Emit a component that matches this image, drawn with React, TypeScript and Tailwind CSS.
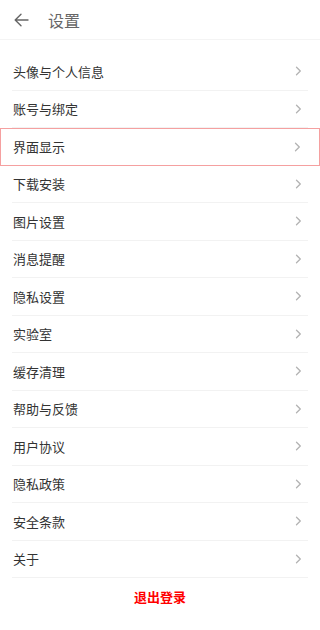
import React from 'react';

const items = [
  '头像与个人信息',
  '账号与绑定',
  '界面显示',
  '下载安装',
  '图片设置',
  '消息提醒',
  '隐私设置',
  '实验室',
  '缓存清理',
  '帮助与反馈',
  '用户协议',
  '隐私政策',
  '安全条款',
  '关于',
];

const Chevron = () => (
  <svg width="7" height="10" viewBox="0 0 7 10" fill="none" className="shrink-0">
    <path d="M1.5 1.2L5.3 5L1.5 8.8" stroke="#b3b3b3" strokeWidth="1.3" strokeLinecap="round" strokeLinejoin="round" />
  </svg>
);

export default function App() {
  return (
    <div
      className="w-[320px] h-[630px] bg-white overflow-hidden flex flex-col"
      style={{ fontFamily: '"Noto Sans CJK SC", "Noto Sans", sans-serif' }}
    >
      {/* Header */}
      <div className="h-[40px] flex items-center border-b border-[#f4f4f4] shrink-0">
        <div className="w-[48px] flex items-center pl-[14px]">
          <svg width="15" height="14" viewBox="0 0 15 14" fill="none">
            <path d="M14 7H1.5M7 1.2L1.2 7L7 12.8" stroke="#666" strokeWidth="1.4" strokeLinecap="round" strokeLinejoin="round" />
          </svg>
        </div>
        <span className="text-[16px] text-[#666] leading-none">设置</span>
      </div>

      {/* List */}
      <div className="mt-[13px] flex flex-col">
        {items.map((label) =>
          label === '界面显示' ? (
            <div key={label} className="h-[37.5px] border border-[#f5a0a0] flex items-center pl-[12px] pr-[18px]">
              <span className="flex-1 text-[13px] text-[#333]">{label}</span>
              <Chevron />
            </div>
          ) : (
            <div key={label} className="px-[12px]">
              <div className="h-[37.5px] border-b border-[#f2f2f2] flex items-center pl-[1px] pr-[6px]">
                <span className="flex-1 text-[13px] text-[#333]">{label}</span>
                <Chevron />
              </div>
            </div>
          )
        )}
      </div>

      {/* Logout */}
      <div className="h-[38px] flex items-center justify-center">
        <span className="text-[13px] font-bold text-[#f00]">退出登录</span>
      </div>
    </div>
  );
}
